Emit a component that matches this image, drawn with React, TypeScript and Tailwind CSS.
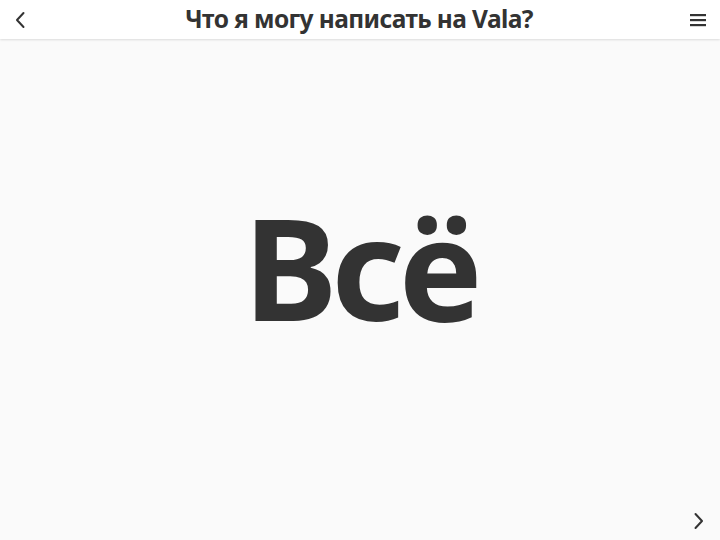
import React from 'react';

const font = { fontFamily: '"Noto Sans", "Open Sans", sans-serif' };

const App: React.FC = () => {
  return (
    <div className="flex h-[540px] w-[720px] flex-col overflow-hidden bg-[#fafafa] text-[#333333]" style={font}>
      {/* Header */}
      <header className="relative z-10 flex h-[39px] shrink-0 items-center justify-between bg-white pl-[10px] pr-[12px] shadow-[0_1px_2px_rgba(0,0,0,0.12)]">
        <button className="flex h-[30px] w-[20px] items-center justify-center">
          <svg width="12" height="18" viewBox="0 0 12 18" fill="none">
            <path d="M9.5 2 L3 9 L9.5 16" stroke="#333" strokeWidth="2" strokeLinecap="round" strokeLinejoin="round" />
          </svg>
        </button>
        <h1 className="text-[24.5px] font-bold leading-none tracking-[-0.6px]">Что я могу написать на Vala?</h1>
        <button className="flex h-[30px] w-[20px] items-center justify-center">
          <svg width="16" height="14" viewBox="0 0 16 14">
            <rect x="0" y="1" width="16" height="2.2" fill="#333" />
            <rect x="0" y="6" width="16" height="2.2" fill="#333" />
            <rect x="0" y="11" width="16" height="2.2" fill="#333" />
          </svg>
        </button>
      </header>

      {/* Slide */}
      <main className="relative flex flex-1 items-center justify-center">
        <div className="mb-[46px] text-[141px] font-bold leading-none tracking-[-5px]">Всё</div>
        <button className="absolute bottom-[8px] right-[14px] flex h-[22px] w-[14px] items-center justify-center">
          <svg width="12" height="18" viewBox="0 0 12 18" fill="none">
            <path d="M2.5 2 L9 9 L2.5 16" stroke="#333" strokeWidth="2" strokeLinecap="round" strokeLinejoin="round" />
          </svg>
        </button>
      </main>
    </div>
  );
};

export default App;
